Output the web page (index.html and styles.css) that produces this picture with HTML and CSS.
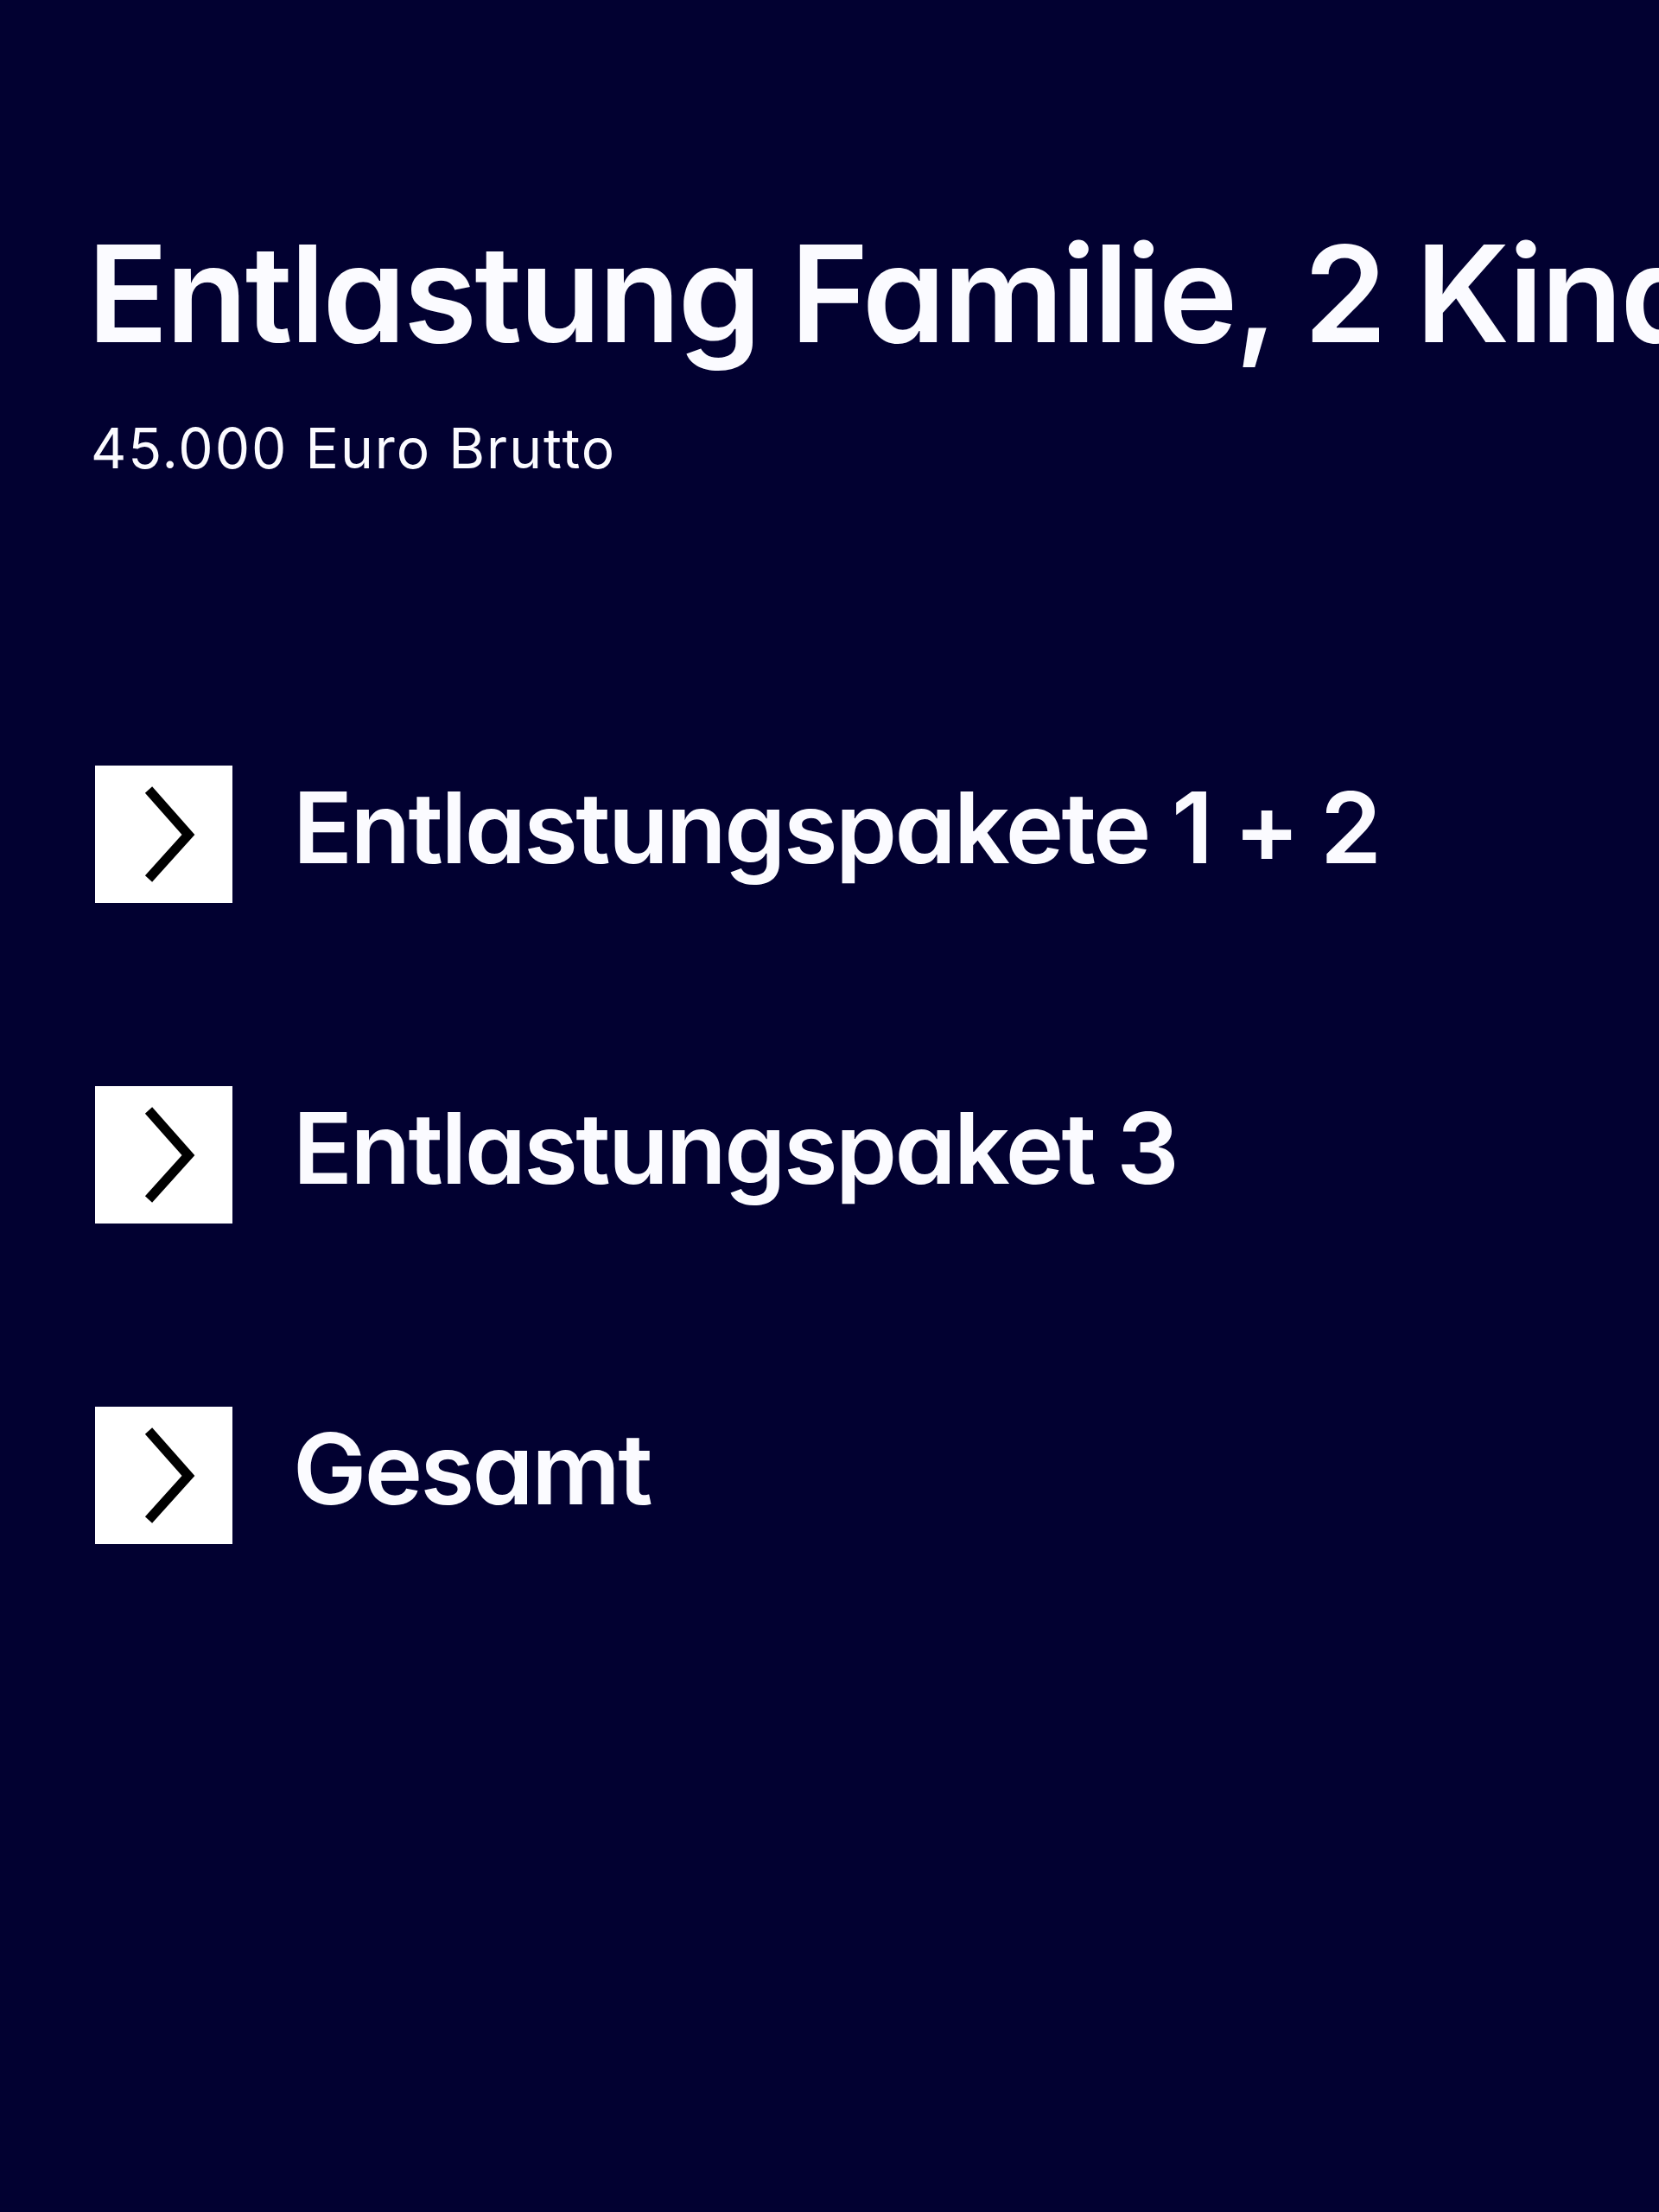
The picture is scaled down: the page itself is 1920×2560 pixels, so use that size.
FILE: index.html
```html
<!DOCTYPE html>
<html lang="de">
<head>
<meta charset="utf-8">
<title>Entlastung Familie, 2 Kinder</title>
<link rel="stylesheet" href="styles.css">
</head>
<body>

<main class="page">

	<header class="intro">
		<h1 class="intro-title">Entlastung Familie, 2 Kinder</h1>
		<p class="intro-sub">45.000 Euro Brutto</p>
	</header>

	<ul class="topics">
		<li class="topic">
			<span class="topic-icon">
				<svg viewBox="0 0 159 159" width="159" height="159"><polyline points="62,28 108,80 62,131"/></svg>
			</span>
			<span class="topic-label">Entlastungspakete 1 + 2</span>
		</li>
		<li class="topic">
			<span class="topic-icon">
				<svg viewBox="0 0 159 159" width="159" height="159"><polyline points="62,28 108,80 62,131"/></svg>
			</span>
			<span class="topic-label">Entlastungspaket 3</span>
		</li>
		<li class="topic">
			<span class="topic-icon">
				<svg viewBox="0 0 159 159" width="159" height="159"><polyline points="62,28 108,80 62,131"/></svg>
			</span>
			<span class="topic-label">Gesamt</span>
		</li>
	</ul>

</main>

</body>
</html>
```

FILE: styles.css
```css
html,body{
	margin:0;
	padding:0;
	background-color:#020131;
}
body{
	width:1920px;
	height:2560px;
	overflow:hidden;
	font-family:'Inter','Noto Sans',sans-serif;
	font-feature-settings:'cv11' 1;
	color:#fbfbff;
}
.page{
	padding:262px 0 0 101px;
}

/* heading */
.intro-title{
	margin:0;
	font-size:155px;
	font-weight:600;
	line-height:1;
	letter-spacing:-3px;
	white-space:nowrap;
}
.intro-sub{
	margin:70px 0 0 4px;
	font-size:64px;
	font-weight:400;
	line-height:1;
	letter-spacing:2px;
}

/* topic list */
.topics{
	list-style:none;
	margin:0;
	padding:0;
	padding-top:335px;
	display:flex;
	flex-direction:column;
	gap:212px;
}
.topic{
	display:flex;
	align-items:center;
	gap:70px;
	padding-left:9px;
}
.topic-icon{
	width:159px;
	height:159px;
	background-color:#ffffff;
	flex:none;
	display:block;
}
.topic-icon svg{
	display:block;
}
.topic-icon polyline{
	fill:none;
	stroke:#000000;
	stroke-width:11;
	stroke-linejoin:miter;
}
.topic-label{
	padding-bottom:16px;
	font-size:114px;
	font-weight:600;
	line-height:1;
	letter-spacing:-2.6px;
	white-space:nowrap;
}
```
